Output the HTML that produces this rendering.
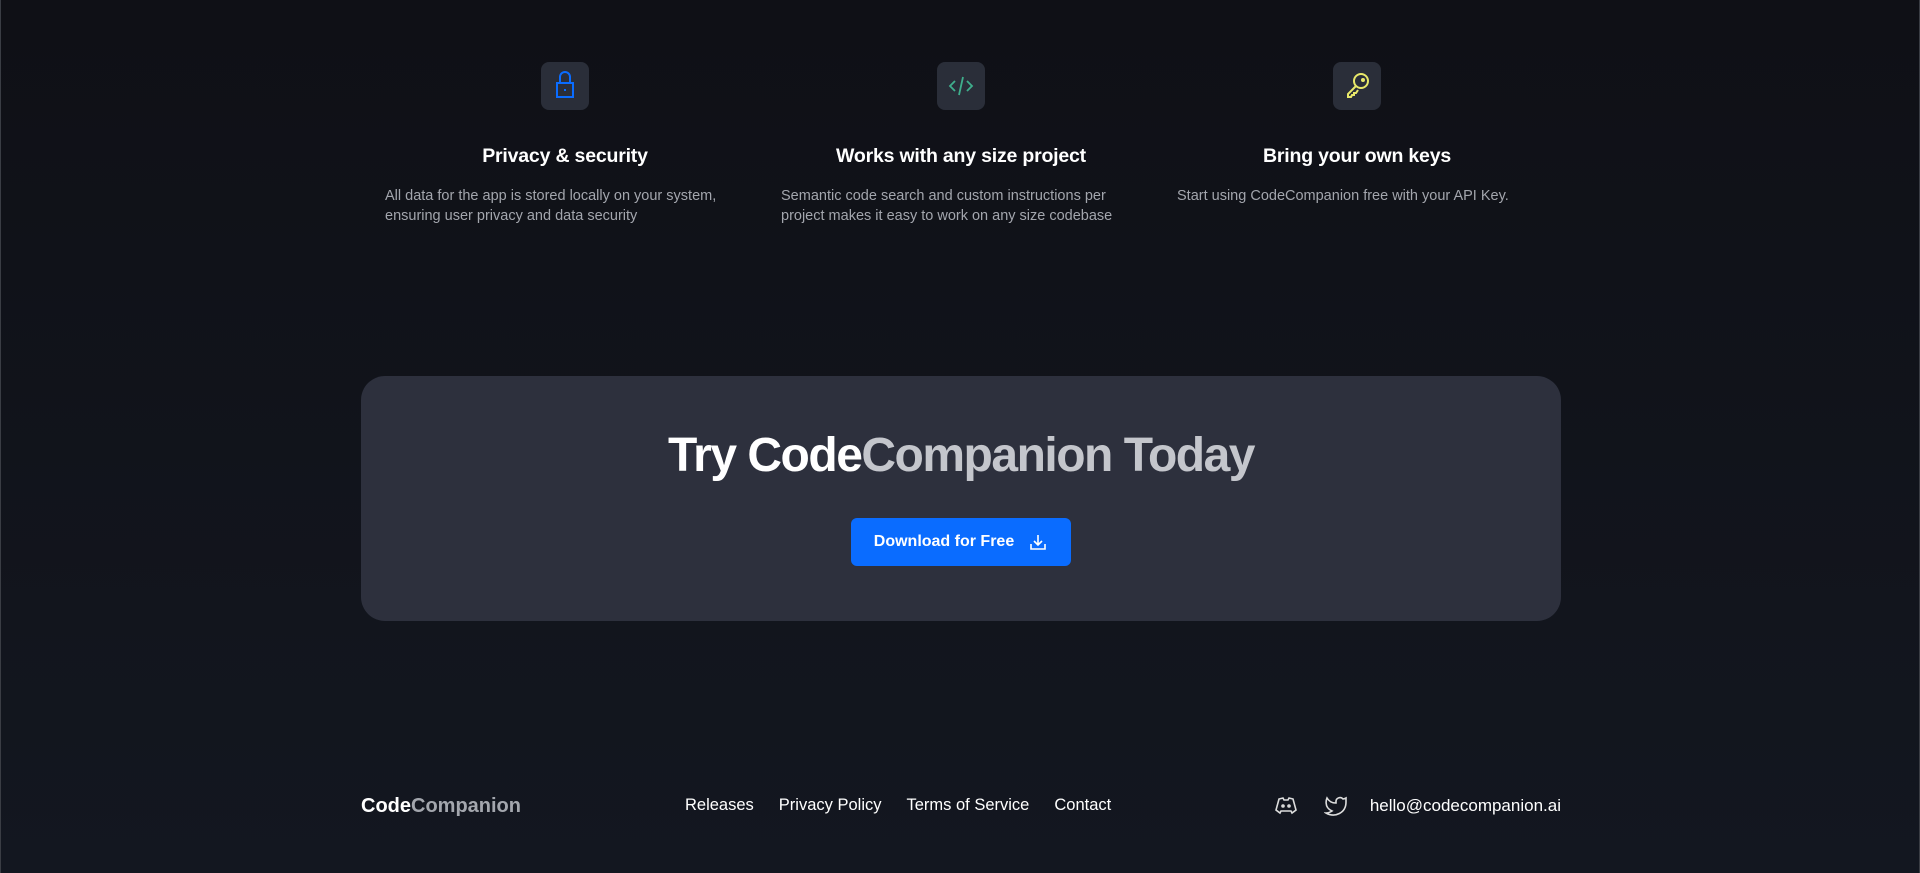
<!DOCTYPE html>
<html><head><meta charset="utf-8"><style>
*{margin:0;padding:0;box-sizing:border-box}
html,body{width:1920px;height:873px;overflow:hidden}
body{background:linear-gradient(#0f1016,#131720);font-family:"Liberation Sans",sans-serif;color:#fff;position:relative;border-left:1px solid #3a3d44;border-right:1px solid #3a3d44}
.col{position:absolute;top:62px;width:360px}
.ib{width:48px;height:48px;border-radius:8px;background:#2a2e39;margin:0 auto;display:flex;align-items:center;justify-content:center}
.col h3{font-size:19.5px;font-weight:600;text-align:center;margin-top:35px;letter-spacing:-0.2px}
.col p{font-size:14.5px;line-height:20px;color:#a3a6ad;margin-top:18px;width:350px}
.cta{position:absolute;left:360px;top:376px;width:1200px;height:245px;border-radius:24px;background:#2d303d}
.cta h2{position:absolute;top:52px;width:100%;text-align:center;font-size:48px;font-weight:600;letter-spacing:-1.5px}
.btn{position:absolute;left:490px;top:142px;width:220px;height:48px;border-radius:6px;background:#0a6cff;display:flex;align-items:center;justify-content:center;gap:14px;font-size:16px;font-weight:600}
.foot{position:absolute;top:796px;left:360px;width:1200px;height:24px;font-size:16.5px}
.foot .logo{position:absolute;left:0;font-size:20px;font-weight:700;top:-1px}
.links{position:absolute;left:324px;display:flex;gap:25px}
.right{position:absolute;right:0;top:-1px;display:flex;gap:26px;align-items:center;font-size:17px}
</style></head><body>
<div class="col" style="left:384px">
<div class="ib"><svg width="28" height="30" viewBox="0 0 28 30" fill="none" stroke="#0a6cff" stroke-width="2"><path d="M9 12V6a5 5 0 0 1 10 0v6"/><rect x="6" y="12" width="16" height="14"/><path d="M14 18v2"/></svg></div>
<h3>Privacy &amp; security</h3>
<p>All data for the app is stored locally on your system, ensuring user privacy and data security</p></div>
<div class="col" style="left:780px">
<div class="ib"><svg width="28" height="28" viewBox="0 0 28 28" fill="none" stroke="#3fae8c" stroke-width="1.8"><path d="M8 9l-5 5 5 5M20 9l5 5-5 5M16 5l-4 18"/></svg></div>
<h3>Works with any size project</h3>
<p>Semantic code search and custom instructions per project makes it easy to work on any size codebase</p></div>
<div class="col" style="left:1176px">
<div class="ib"><svg width="30" height="30" viewBox="0 0 30 30" fill="none" stroke="#e8e86a" stroke-width="2"><circle cx="19" cy="10" r="7"/><path d="M14 15L6 23v3h3l1-2h2v-2h2l2-3"/><circle cx="21" cy="9" r="1"/></svg></div>
<h3>Bring your own keys</h3>
<p>Start using CodeCompanion free with your API Key.</p></div>
<div class="cta"><h2>Try Code<span style="color:#c4c6cc">Companion Today</span></h2>
<div class="btn">Download for Free <svg width="20" height="20" viewBox="0 0 20 20" fill="none" stroke="#fff" stroke-width="1.6"><path d="M10 3v10M6 9l4 4 4-4M3 12v5h14v-5"/></svg></div></div>
<div class="foot"><span class="logo">Code<span style="color:#a3a6ad">Companion</span></span>
<div class="links"><span>Releases</span><span>Privacy Policy</span><span>Terms of Service</span><span>Contact</span></div>
<div class="right"><svg width="24" height="22" viewBox="0 0 24 22" fill="none" stroke="#ddd" stroke-width="1.6"><path d="M5 4l4-1 1 2h4l1-2 4 1 3 11-4 3-1-2H7l-1 2-4-3z"/><circle cx="9" cy="11" r="1"/><circle cx="15" cy="11" r="1"/></svg><svg width="24" height="22" viewBox="0 0 24 22" fill="none" stroke="#ddd" stroke-width="1.6"><path d="M22 3a9 9 0 0 1-3 1 4 4 0 0 0-7 3v1A10 10 0 0 1 3 3s-4 9 5 13a11 11 0 0 1-6 2c9 5 20 0 20-11z"/></svg><span style="margin-left:-4px">hello@codecompanion.ai</span></div></div>
</body></html>
